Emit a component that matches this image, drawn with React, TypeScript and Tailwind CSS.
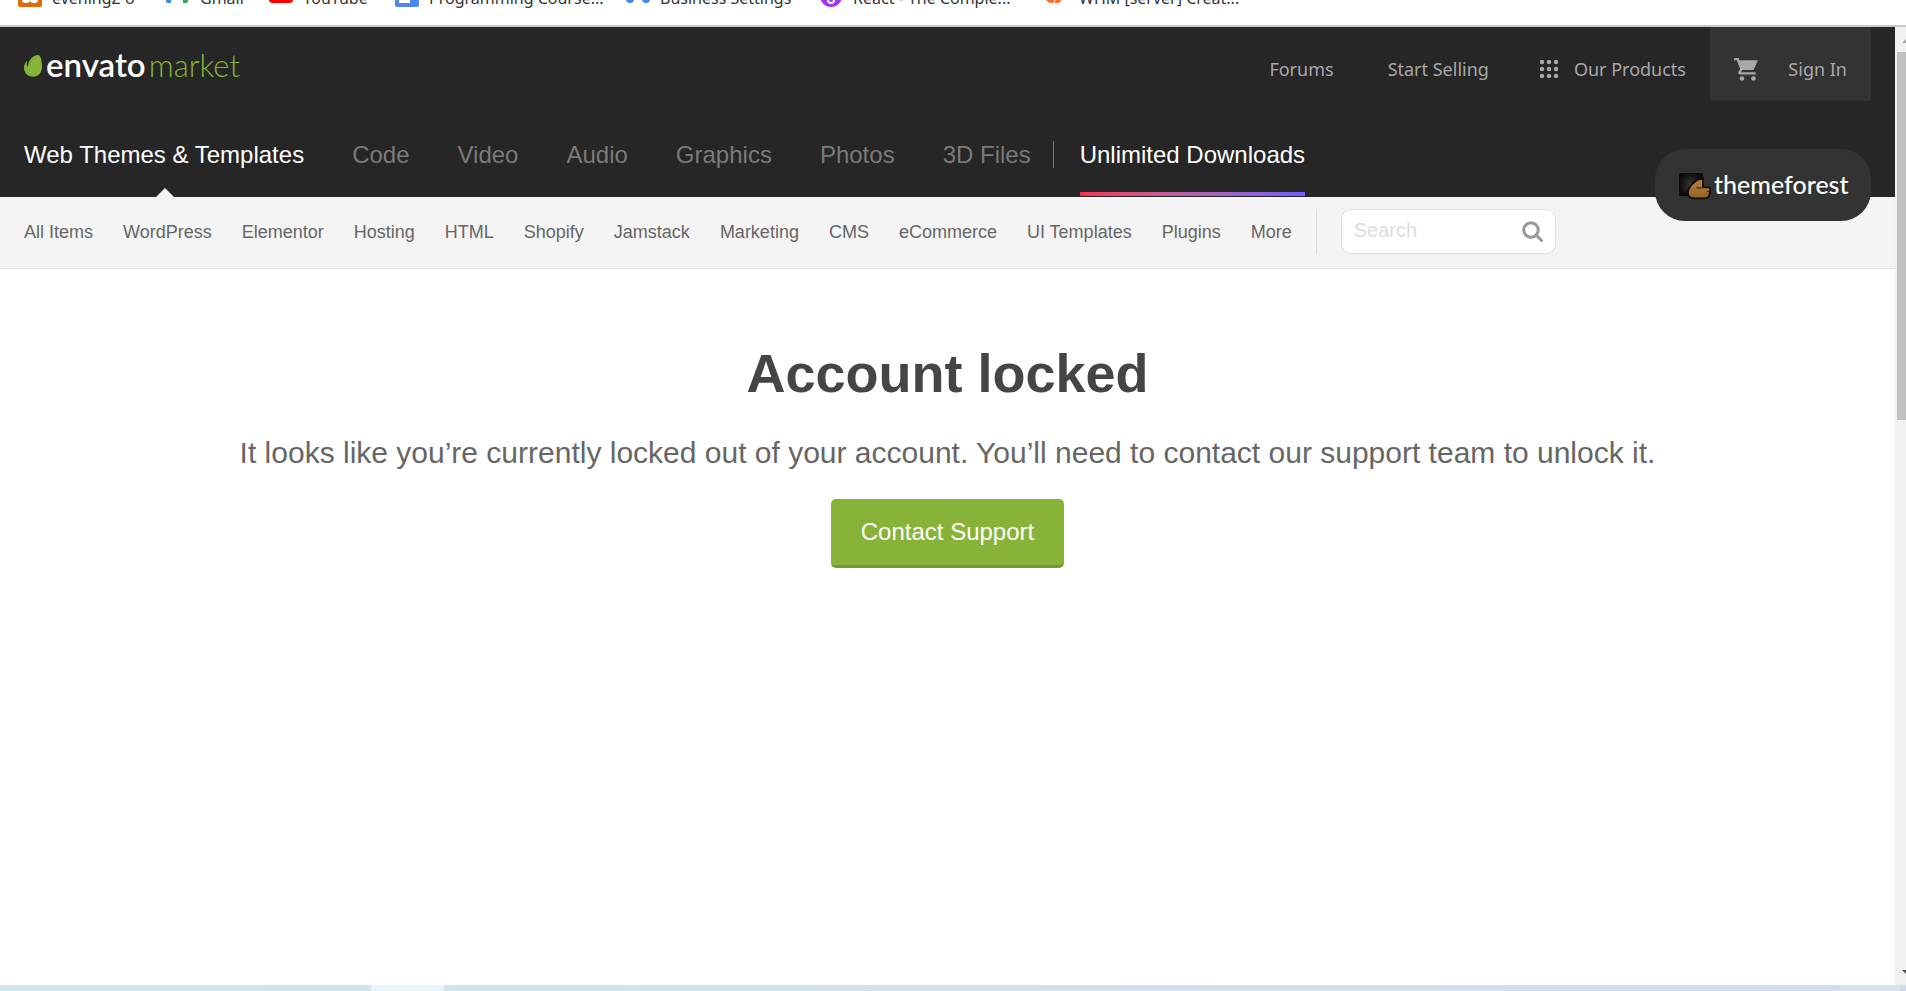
import React from "react";

const bookmarks = [
  { label: "eveningZ o", box: "w-[90px]", icon: <svg width="24" height="8" viewBox="0 0 24 8"><path d="M0 0h24v5q0 2-2 2H2q-2 0-2-2z" fill="#dc6b0c" /><ellipse cx="8" cy="0" rx="4" ry="3" fill="#fff" /><ellipse cx="16" cy="0" rx="4" ry="3" fill="#fff" /></svg> },
  { label: "Gmail", box: "w-[45px]", icon: <svg width="24" height="8" viewBox="0 0 24 8"><path d="M0 0h5v3H2q-2 0-2-2z" fill="#4285f4" /><path d="M17 0h5v1q0 2-2 2h-3z" fill="#34a853" /></svg> },
  { label: "YouTube", box: "w-[68px]", icon: <svg width="24" height="8" viewBox="0 0 24 8"><path d="M0 0h24q0 3-4 3H4q-4 0-4-3z" fill="#f00" /></svg> },
  { label: "Programming Course...", box: "w-[173px]", icon: <svg width="24" height="8" viewBox="0 0 24 8"><path d="M0 0h24v5q0 2-2 2H2q-2 0-2-2z" fill="#4f86f7" /><path d="M4 0h11v3H4z" fill="#fff" /></svg> },
  { label: "Business Settings", box: "w-[135px]", icon: <svg width="24" height="8" viewBox="0 0 24 8"><circle cx="4" cy="-1" r="4" fill="#3d86f8" /><circle cx="20" cy="-1" r="4" fill="#3d86f8" /></svg> },
  { label: "React - The Comple...", box: "w-[168px]", icon: <svg width="24" height="8" viewBox="0 0 24 8"><circle cx="12" cy="-4" r="11" fill="#a435f0" /><circle cx="12" cy="0" r="3" fill="none" stroke="#fff" strokeWidth="2" /></svg> },
  { label: "WHM [server] Creat...", box: "w-[168px]", icon: <svg width="24" height="8" viewBox="0 0 24 8"><path d="M1 0h15q0 3-4 3H7Q3 3 1 0z" fill="#ff6c2c" /><path d="M10 0l-1 3" stroke="#fff" /></svg> },
];

const categories = ["Code", "Video", "Audio", "Graphics", "Photos", "3D Files"];
const sections = ["All Items", "WordPress", "Elementor", "Hosting", "HTML", "Shopify", "Jamstack", "Marketing", "CMS", "eCommerce", "UI Templates", "Plugins", "More"];

function BookmarkBar() {
  return (
    <div className="h-[27px] shrink-0 overflow-hidden border-b-2 border-[#c8c8c8] bg-white pl-[18px]">
      <div className="flex items-start gap-6">
        {bookmarks.map((b) => (
          <a key={b.label} href="#" className="flex items-start gap-[10px]">
            {b.icon}
            <span className={`-mt-[13px] whitespace-nowrap font-['Noto_Sans'] text-[16px] leading-[22px] text-[#333] ${b.box}`}>{b.label}</span>
          </a>
        ))}
      </div>
    </div>
  );
}

function EnvatoLogo() {
  return (
    <a href="#" aria-label="envato market" className="flex items-start">
      <svg width="18" height="22" viewBox="0 0 18 22" className="mt-[8px]">
        <path d="M14.800.2C11.500-.8 4.300 4 4.100 11.200c0 .5-.6.500-.8.100C2.600 9.600 2.700 8 3.100 6.500c.1-.5-.3-.7-.6-.3C1 7.900 0 10.200 0 12.800 0 18 4 21.800 9.100 21.800c5.200 0 8.900-4 8.900-10.300C18 7.300 16.900 1 14.800.2z" fill="#87b338" />
      </svg>
      <span className="ml-1 flex items-baseline gap-[3px] font-['Lato'] leading-[34px]">
        <span className="text-[33px] font-semibold text-white">envato</span>
        <span className="text-[31px] font-light text-[#87b338]">market</span>
      </span>
    </a>
  );
}

function CartIcon() {
  return (
    <svg width="24" height="23" viewBox="0 0 24 23" fill="#a8a8a8">
      <path d="M0 0h4.500l1.200 2.200H24L19.500 12H8.300l-1.200 2.200h14.600v2.300H6q-2.600-.2-1.600-2.500l1.700-3L2.800 2.200H0z" />
      <circle cx="8" cy="20.500" r="2.300" />
      <circle cx="19.500" cy="20.500" r="2.300" />
    </svg>
  );
}

function ThemeforestBadge() {
  return (
    <a href="#" aria-label="themeforest" className="absolute right-6 top-[122px] flex h-[72px] w-[216px] items-center rounded-[30px] bg-[#333] pl-6">
      <svg width="32" height="28" viewBox="0 0 32 28" className="mt-[2px]">
        <defs>
          <radialGradient id="tile"><stop offset="0" stopColor="#383838" /><stop offset="1" stopColor="#0c0c0c" /></radialGradient>
          <linearGradient id="hand" x1="0" y1="0" x2="0" y2="1"><stop offset="0" stopColor="#bb8143" /><stop offset="1" stopColor="#946325" /></linearGradient>
        </defs>
        <rect x="0" y="1" width="24" height="23" rx="1" fill="url(#tile)" />
        <path d="M24 6C16 8 9 14 9 21.500c0 3.500 2.500 4.900 7 4.900h7c5 0 7-.9 7-3.400 1-1 1-2 .6-3 .9-1.500 1-4-.6-4.500l-6-.2z" fill="url(#hand)" stroke="#0b0906" strokeWidth="1.600" />
        <path d="M17.500 15.500q3 1.500 6.500 0M28 19.500h2.500" fill="none" stroke="#2a1a08" strokeWidth="1" />
      </svg>
      <span className="ml-[3px] pb-[3px] font-['Lato'] text-[25px] font-medium leading-[32px] text-white">themeforest</span>
    </a>
  );
}

function Header() {
  return (
    <header className="relative">
      <div className="flex h-[170px] flex-col bg-[#262626] pl-6 pr-6">
        <div className="flex h-[74px] items-start justify-between">
          <div className="pt-[20px]"><EnvatoLogo /></div>
          <nav className="flex h-[74px] items-center font-['Noto_Sans'] text-[18px] text-[#a8a8a8]">
            <a href="#" className="pt-[10px]">Forums</a>
            <a href="#" className="ml-[54px] pt-[10px]">Start Selling</a>
            <a href="#" className="ml-[51px] flex items-center gap-4 pt-[10px]">
              <svg width="18" height="18" viewBox="0 0 18 18" fill="#a8a8a8">
                {[2, 9, 16].map((y) => [2, 9, 16].map((x) => <circle key={`${x}-${y}`} cx={x} cy={y} r="2.200" />))}
              </svg>
              Our Products
            </a>
            <div className="ml-6 flex h-[74px] w-[161px] items-center justify-between rounded-b-[4px] bg-[#333] pl-6 pr-6 pt-[10px]">
              <a href="#" aria-label="Cart"><CartIcon /></a>
              <a href="#">Sign In</a>
            </div>
          </nav>
        </div>
        <nav className="flex flex-1 items-stretch text-[24px] leading-[28px] text-[#7a7a7a]">
          <a href="#" className="relative pt-[40px] text-white">
            Web Themes &amp; Templates
            <svg className="absolute bottom-0 left-1/2 -ml-2" width="18" height="9" viewBox="0 0 18 9"><path d="M0 9l9-9 9 9z" fill="#f4f4f4" /></svg>
          </a>
          {categories.map((c) => <a key={c} href="#" className="ml-12 pt-[40px]">{c}</a>)}
          <div className="ml-[22px] mt-[40px] h-[27px] w-px bg-[#7a7a7a]" />
          <a href="#" className="relative ml-[26px] pt-[40px] text-white">
            Unlimited Downloads
            <span className="absolute bottom-px left-0 h-1 w-full bg-linear-to-r from-[#f5314e] to-[#6f5cff]" />
          </a>
        </nav>
      </div>
      <div className="flex h-[72px] items-start border-b border-[#e1e8ed] bg-[#f4f4f4] pl-6 pt-3 text-[18px] text-[#666]">
        <nav className="flex h-[47px] items-center gap-[30px]">
          {sections.map((s) => <a key={s} href="#" className="whitespace-nowrap">{s}</a>)}
        </nav>
        <div className="ml-6 h-[45px] w-px bg-[#ddd]" />
        <form className="ml-6 flex h-[45px] w-[215px] items-center rounded-[10px] border border-[#ddd] bg-white pl-3 pr-3">
          <input aria-label="Search" placeholder="Search" className="min-w-0 flex-1 pb-1 text-[20px] outline-none placeholder:text-[#ddd]" />
          <button type="button" aria-label="Submit search">
            <svg width="21" height="21" viewBox="0 0 21 21" fill="none" stroke="#999" strokeWidth="3"><circle cx="9" cy="9" r="7.300" /><path d="M14 14l5.500 5.500" strokeLinecap="round" /></svg>
          </button>
        </form>
      </div>
      <ThemeforestBadge />
    </header>
  );
}

function ScrollBar() {
  return (
    <div className="flex w-[11px] shrink-0 flex-col overflow-hidden bg-[#f1f1f1]">
      <svg width="11" height="25" viewBox="0 0 11 25"><path d="M7 16l6-6v6z" fill="#a3a3a3" /></svg>
      <div className="ml-[2px] h-[368px] bg-[#c1c1c1]" />
      <svg className="mt-auto" width="11" height="17" viewBox="0 0 11 17"><path d="M7 2h5v5z" fill="#505050" /></svg>
    </div>
  );
}

export default function App() {
  return (
    <div className="flex min-h-screen flex-col bg-white font-['Liberation_Sans',sans-serif]">
      <BookmarkBar />
      <div className="flex flex-1">
        <div className="min-w-0 flex-1">
          <Header />
          <main className="flex flex-col items-center pt-[70px] text-center">
            <h1 className="text-[54px] font-bold leading-[68px] text-[#454545]">Account locked</h1>
            <p className="mt-6 text-[30px] leading-[44px] text-[#666]">It looks like you’re currently locked out of your account. You’ll need to contact our support team to unlock it.</p>
            <button type="button" className="mt-6 h-[69px] rounded-[5px] border-b-[3px] border-[#6f9a37] bg-[#87b338] px-[30px] text-[24px] text-white">Contact Support</button>
          </main>
        </div>
        <ScrollBar />
      </div>
      <div className="flex h-[6px] shrink-0 bg-linear-to-r from-[#d0e6ee] to-[#d3dae9]">
        <div className="ml-[371px] w-[73px] bg-[#ebf5f9]" />
        <div className="ml-auto mr-[6px] w-[60px] bg-[#dae1ee]" />
      </div>
    </div>
  );
}
